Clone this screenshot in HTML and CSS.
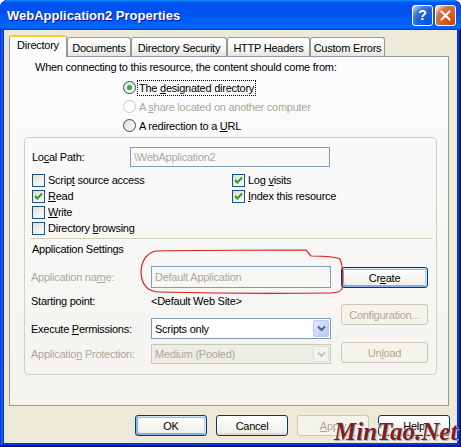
FILE: index.html
```html
<!DOCTYPE html>
<html lang="en">
<head>
  <meta charset="UTF-8">
  <title>WebApplication2 Properties</title>
  <link rel="stylesheet" href="styles.css">
</head>
<body>
  <div class="window">
    <div class="titlebar">
      <span class="title">WebApplication2 Properties</span>
      <div class="caption-buttons">
        <span class="cap-btn help">?</span>
        <span class="cap-btn close">
          <svg width="13" height="13" viewBox="0 0 13 13"><path d="M2.5 2.5 L10.5 10.5 M10.5 2.5 L2.5 10.5" stroke="#fff" stroke-width="2.2" stroke-linecap="round"/></svg>
        </span>
      </div>
    </div>

    <div class="client">
      <div class="tabs">
        <span class="tab active tab-dir">Directory</span>
        <span class="tab tab-docs">Documents</span>
        <span class="tab tab-sec">Directory Security</span>
        <span class="tab tab-http">HTTP Headers</span>
        <span class="tab tab-err">Custom Errors</span>
      </div>

      <div class="panel">
        <p class="intro">When connecting to this resource, the content should come from:</p>

        <div class="radios">
          <div class="radio">
            <svg class="radio-dot" width="13" height="13" viewBox="0 0 13 13"><circle cx="6.5" cy="6.5" r="6" fill="url(#rfill)" stroke="#1C5180"/><circle cx="6.5" cy="6.5" r="2.6" fill="#2FB52F"/><defs><linearGradient id="rfill" x1="0" y1="0" x2="1" y2="1"><stop offset="0" stop-color="#DCDCD7"/><stop offset="1" stop-color="#FFFFFF"/></linearGradient></defs></svg>
            <span class="focus">The <u>d</u>esignated directory</span>
          </div>
          <div class="radio disabled">
            <svg class="radio-dot" width="13" height="13" viewBox="0 0 13 13"><circle cx="6.5" cy="6.5" r="6" fill="#FFFFFF" stroke="#CAC8BB"/></svg>
            <span>A <u>s</u>hare located on another computer</span>
          </div>
          <div class="radio">
            <svg class="radio-dot" width="13" height="13" viewBox="0 0 13 13"><circle cx="6.5" cy="6.5" r="6" fill="url(#rfill)" stroke="#1C5180"/></svg>
            <span>A redirection to a <u>U</u>RL</span>
          </div>
        </div>

        <div class="group">
          <div class="path-row">
            <span class="path-label">Lo<u>c</u>al Path:</span>
            <span class="field path-field">\WebApplication2</span>
          </div>

          <div class="checks">
            <div class="check"><span class="box"></span><span>Scrip<u>t</u> source access</span></div>
            <div class="check"><span class="box"><svg width="11" height="11" viewBox="0 0 11 11"><path d="M2 5 L4.3 7.5 L9 2.5" fill="none" stroke="#21A121" stroke-width="2"/></svg></span><span>Log <u>v</u>isits</span></div>
            <div class="check"><span class="box"><svg width="11" height="11" viewBox="0 0 11 11"><path d="M2 5 L4.3 7.5 L9 2.5" fill="none" stroke="#21A121" stroke-width="2"/></svg></span><span><u>R</u>ead</span></div>
            <div class="check"><span class="box"><svg width="11" height="11" viewBox="0 0 11 11"><path d="M2 5 L4.3 7.5 L9 2.5" fill="none" stroke="#21A121" stroke-width="2"/></svg></span><span><u>I</u>ndex this resource</span></div>
            <div class="check"><span class="box"></span><span><u>W</u>rite</span></div>
            <div></div>
            <div class="check"><span class="box"></span><span>Directory <u>b</u>rowsing</span></div>
          </div>

          <div class="separator"></div>
          <div class="app-title">Application Settings</div>

          <div class="app">
            <div class="app-fields">
              <div class="app-row name-row">
                <span class="app-label muted">Application na<u>m</u>e:</span>
                <span class="field name-field">Default Application</span>
              </div>
              <div class="app-row start-row">
                <span class="app-label">Starting point:</span>
                <span class="value">&lt;Default Web Site&gt;</span>
              </div>
              <div class="app-row exec-row">
                <span class="app-label">Execute <u>P</u>ermissions:</span>
                <div class="combo">
                  <span>Scripts only</span>
                  <span class="combo-arrow"><svg width="9" height="7" viewBox="0 0 9 7"><path d="M1 1.5 L4.5 5 L8 1.5" fill="none" stroke="#4D6185" stroke-width="2"/></svg></span>
                </div>
              </div>
              <div class="app-row prot-row">
                <span class="app-label muted">Applicatio<u>n</u> Protection:</span>
                <div class="combo combo-disabled">
                  <span>Medium (Pooled)</span>
                  <span class="combo-arrow"><svg width="9" height="7" viewBox="0 0 9 7"><path d="M1 1.5 L4.5 5 L8 1.5" fill="none" stroke="#C9C7BA" stroke-width="2"/></svg></span>
                </div>
              </div>
            </div>
            <div class="app-buttons">
              <button class="btn focused btn-create">Cr<u>e</u>ate</button>
              <button class="btn btn-config" disabled>Configuration...</button>
              <button class="btn btn-unload" disabled>Un<u>l</u>oad</button>
            </div>
          </div>
        </div>
      </div>

      <div class="dialog-buttons">
        <button class="btn focused">OK</button>
        <button class="btn">Cancel</button>
        <button class="btn" disabled><u>A</u>pply</button>
        <button class="btn">Help</button>
      </div>
    </div>

    <svg class="annotation" width="461" height="447" viewBox="0 0 461 447">
      <path d="M156 251 C200 250 270 250 306 250 L311 256 C322 256 334 256 340 259 C343 266 343 280 342 289 C340 292 336 293 330 293 C260 294 200 293 160 292 C148 292 142 286 141 273 C141 262 146 253 156 251 Z" fill="none" stroke="#D42020" stroke-width="1.2"/>
    </svg>
    <span class="watermark">MinTao.Net</span>
  </div>
</body>
</html>
```

FILE: styles.css
```css
body {
  margin: 0;
  background: #fff;
  font-family: "Liberation Sans", Arial, sans-serif;
  font-size: 11px;
  letter-spacing: -0.25px;
  color: #000;
}
u {
  text-decoration-thickness: 1px;
  text-underline-offset: 1px;
}
.window {
  position: relative;
  width: 461px;
  height: 447px;
  display: flex;
  flex-direction: column;
  background: #0831D9;
  border-radius: 8px 8px 0 0;
  box-shadow: inset -1px -1px #00138C, inset 1px 0 #0831D9, inset -2px -2px #001EA0, inset 2px 0 #166AEE, inset -3px -3px #003BDA, inset 3px 0 #0855DD;
  overflow: hidden;
}
.titlebar {
  height: 30px;
  flex: none;
  display: flex;
  align-items: center;
  justify-content: space-between;
  padding: 0 5px 0 7px;
  background: linear-gradient(180deg, #0997FF, #0053EE 8%, #0050EE 40%, #0066FF 88%, #0066FF 93%, #005BFF 95%, #003DD7 96%, #003DD7);
  border-radius: 8px 8px 0 0;
}
.title {
  color: #fff;
  font-weight: bold;
  font-size: 13px;
  letter-spacing: 0;
  text-shadow: 1px 1px #0F1089;
}
.caption-buttons {
  display: flex;
  gap: 2px;
}
.cap-btn {
  width: 21px;
  height: 21px;
  box-sizing: border-box;
  border: 1px solid #fff;
  border-radius: 3px;
  display: flex;
  align-items: center;
  justify-content: center;
  color: #fff;
  font-weight: bold;
  font-size: 14px;
}
.help {
  background: radial-gradient(circle at 90% 90%, #0054E9 0%, #2263D5 55%, #4479E4 70%, #A3BBEC 90%, #fff 100%);
}
.close {
  background: radial-gradient(circle at 90% 90%, #CC4600 0%, #DC6527 55%, #CD7546 70%, #FFCCB2 90%, #fff 100%);
}
.client {
  flex: 1;
  margin: 0 4px 4px;
  background: #ECE9D8;
  padding: 5px 8px 0 5px;
}
.tabs {
  display: flex;
  align-items: flex-end;
  height: 22px;
  margin-bottom: -1px;
  position: relative;
}
.tab {
  height: 19px;
  margin-bottom: 1px;
  box-sizing: border-box;
  border: 1px solid #919B9C;
  border-bottom: none;
  border-radius: 3px 3px 0 0;
  background: linear-gradient(#FFFFFF, #F3F3EF 70%, #E6E4DA);
  display: flex;
  align-items: center;
  justify-content: center;
  padding-top: 1px;
}
.tab.active {
  height: 22px;
  margin-bottom: 0;
  background: #FCFCFE;
  border-top: 2px solid #FFC83C;
  align-items: flex-start;
  padding-top: 2px;
  position: relative;
  z-index: 1;
}
.tab-dir { width: 58px; }
.tab-docs { width: 64px; }
.tab-sec { width: 96px; }
.tab-http { width: 83px; }
.tab-err { width: 75px; }
.panel {
  width: 440px;
  height: 350px;
  box-sizing: border-box;
  border: 1px solid #919B9C;
  background: linear-gradient(#FCFCFE, #F4F3EE);
  padding: 4px 11px 0 14px;
}
.intro {
  margin: 0 0 0 11px;
  line-height: 13px;
}
.radios {
  margin: 4px 0 0 99px;
}
.radio {
  height: 19px;
  display: flex;
  align-items: center;
  gap: 2px;
}
.radio span {
  padding: 1px 1px;
}
.radio .focus {
  outline: 1px dotted #000;
}
.radio.disabled {
  color: #ACA899;
}
.group {
  margin-top: 2px;
  height: 238px;
  box-sizing: border-box;
  border: 1px solid #D0D0BF;
  border-radius: 4px;
  padding: 9px 4px 0 7px;
}
.path-row {
  display: flex;
  align-items: center;
  height: 20px;
}
.path-label {
  width: 98px;
}
.field {
  box-sizing: border-box;
  border: 1px solid #7F9DB9;
  color: #ACA899;
  padding-left: 3px;
  display: flex;
  align-items: center;
  height: 100%;
}
.path-field {
  width: 200px;
}
.checks {
  margin-top: 5px;
  display: grid;
  grid-template-columns: 200px 1fr;
  grid-auto-rows: 16px;
}
.check {
  display: flex;
  align-items: center;
  gap: 3px;
}
.box {
  width: 13px;
  height: 13px;
  box-sizing: border-box;
  border: 1px solid #1C5180;
  background: linear-gradient(135deg, #DCDCD7, #FFFFFF);
  display: flex;
  align-items: center;
  justify-content: center;
}
.separator {
  margin: 2px 0 0 -2px;
  width: 402px;
  height: 1px;
  background: #D0D0BF;
}
.app-title {
  margin-top: 4px;
  line-height: 13px;
}
.app {
  display: flex;
  margin: 10px 0 0 -1px;
}
.app-fields {
  width: 300px;
}
.app-row {
  display: flex;
  align-items: center;
}
.app-label {
  width: 120px;
  flex: none;
}
.muted {
  color: #ACA899;
}
.name-row { height: 22px; }
.name-field { width: 180px; }
.start-row { height: 14px; margin-top: 6px; }
.exec-row { height: 21px; margin-top: 10px; }
.prot-row { height: 20px; margin-top: 5px; }
.combo {
  width: 180px;
  height: 100%;
  box-sizing: border-box;
  border: 1px solid #7F9DB9;
  background: #fff;
  display: flex;
  align-items: center;
  justify-content: space-between;
  padding-left: 3px;
}
.combo-arrow {
  width: 16px;
  height: calc(100% - 2px);
  margin-right: 1px;
  box-sizing: border-box;
  border: 1px solid #BAC9F4;
  border-radius: 2px;
  background: linear-gradient(135deg, #E2EBFE, #B6C8F7);
  display: flex;
  align-items: center;
  justify-content: center;
}
.combo-disabled {
  border-color: #C9C7BA;
  background: #EEEDE5;
  color: #ACA899;
}
.combo-disabled .combo-arrow {
  border-color: #E0DFD6;
  background: #F4F3EE;
}
.app-buttons {
  display: flex;
  flex-direction: column;
  margin-left: 10px;
  width: 87px;
}
.btn {
  font: inherit;
  letter-spacing: inherit;
  color: #000;
  box-sizing: border-box;
  border: 1px solid #003C74;
  border-radius: 3px;
  background: linear-gradient(180deg, #FFFFFF, #F0F0EA 86%, #D6D0C5);
  padding: 0;
}
.btn.focused {
  box-shadow: inset -1px 1px #CEE7FF, inset 1px 2px #98B8EA, inset -2px 2px #BCD4F6, inset 1px -1px #89ADE4, inset 2px -2px #89ADE4;
}
.btn:disabled {
  border-color: #C9C7BA;
  color: #ACA899;
  background: #F5F4EA;
}
.btn-create { height: 21px; margin-top: 1px; }
.btn-config { height: 21px; margin-top: 16px; }
.btn-unload { height: 21px; margin-top: 17px; }
.dialog-buttons {
  display: flex;
  justify-content: flex-end;
  gap: 9px;
  margin: 9px -1px 0 0;
}
.dialog-buttons .btn {
  width: 72px;
  height: 21px;
}
.annotation {
  position: absolute;
  left: 0;
  top: 0;
  pointer-events: none;
}
.watermark {
  position: absolute;
  left: 334px;
  top: 418px;
  font-family: "Liberation Serif", serif;
  font-style: italic;
  font-weight: bold;
  font-size: 25px;
  letter-spacing: 0;
  color: #7E1E1E;
  text-shadow: 1px 1px 0 #B8B8B8, -1px 0 0 #fff;
}
```
